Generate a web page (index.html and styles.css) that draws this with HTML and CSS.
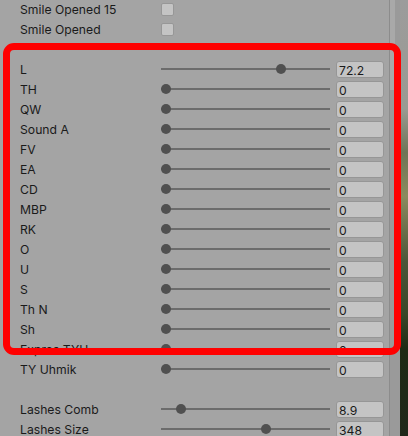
FILE: index.html
```html
<!DOCTYPE html>
<html>
<head>
<meta charset="utf-8">
<link rel="stylesheet" href="styles.css">
</head>
<body>
<div class="window">
  <div class="inspector">
    <div class="row"><span class="label">Smile Opened 15</span><span class="check"></span></div>
    <div class="row"><span class="label">Smile Opened</span><span class="check"></span></div>
    <div class="row"></div>
    <div class="row"><span class="label">L</span><div class="slider" style="--v:0.722"></div><span class="field">72.2</span></div>
    <div class="row"><span class="label">TH</span><div class="slider" style="--v:0"></div><span class="field">0</span></div>
    <div class="row"><span class="label">QW</span><div class="slider" style="--v:0"></div><span class="field">0</span></div>
    <div class="row"><span class="label">Sound A</span><div class="slider" style="--v:0"></div><span class="field">0</span></div>
    <div class="row"><span class="label">FV</span><div class="slider" style="--v:0"></div><span class="field">0</span></div>
    <div class="row"><span class="label">EA</span><div class="slider" style="--v:0"></div><span class="field">0</span></div>
    <div class="row"><span class="label">CD</span><div class="slider" style="--v:0"></div><span class="field">0</span></div>
    <div class="row"><span class="label">MBP</span><div class="slider" style="--v:0"></div><span class="field">0</span></div>
    <div class="row"><span class="label">RK</span><div class="slider" style="--v:0"></div><span class="field">0</span></div>
    <div class="row"><span class="label">O</span><div class="slider" style="--v:0"></div><span class="field">0</span></div>
    <div class="row"><span class="label">U</span><div class="slider" style="--v:0"></div><span class="field">0</span></div>
    <div class="row"><span class="label">S</span><div class="slider" style="--v:0"></div><span class="field">0</span></div>
    <div class="row"><span class="label">Th N</span><div class="slider" style="--v:0"></div><span class="field">0</span></div>
    <div class="row"><span class="label">Sh</span><div class="slider" style="--v:0"></div><span class="field">0</span></div>
    <div class="row"><span class="label">Expres TYH</span><div class="slider" style="--v:0"></div><span class="field">0</span></div>
    <div class="row"><span class="label">TY Uhmik</span><div class="slider" style="--v:0"></div><span class="field">0</span></div>
    <div class="row"></div>
    <div class="row"><span class="label">Lashes Comb</span><div class="slider" style="--v:0.094"></div><span class="field">8.9</span></div>
    <div class="row"><span class="label">Lashes Size</span><div class="slider" style="--v:0.626"></div><span class="field">348</span></div>
  </div>
  <div class="scrollbar"><div class="thumb"></div></div>
  <div class="scene"></div>
  <div class="highlight"></div>
</div>
</body>
</html>
```
FILE: styles.css
```css
html, body {
  margin: 0;
  padding: 0;
  background: #a4a4a4;
}
.window {
  position: relative;
  display: flex;
  width: 408px;
  height: 436px;
  overflow: hidden;
  font-family: Inter, "Noto Sans", sans-serif;
  font-size: 12.2px;
  color: #1a1a1a;
}
.inspector {
  flex: 0 0 389px;
  display: flex;
  flex-direction: column;
  gap: 2px;
  background: #a4a4a4;
}
.row {
  height: 18px;
  flex: 0 0 18px;
  display: flex;
  align-items: flex-start;
  padding-left: 20px;
}
.label {
  flex: 0 0 141px;
  padding-top: 1px;
  line-height: 18px;
  white-space: nowrap;
  overflow: hidden;
}
.check {
  margin-top: 3px;
  width: 11px;
  height: 11px;
  border: 1px solid #979797;
  border-radius: 2px;
  background: #c4c4c4;
}
.slider {
  position: relative;
  flex: 0 0 169px;
  height: 18px;
}
.slider::before {
  content: "";
  position: absolute;
  left: 0;
  right: 0;
  top: 8px;
  height: 2px;
  background: #6c6c6c;
}
.slider::after {
  content: "";
  position: absolute;
  top: 4px;
  left: calc(var(--v) * (100% - 10px));
  width: 10px;
  height: 10px;
  border-radius: 50%;
  background: #505050;
}
.field {
  margin-left: 6px;
  margin-top: 1px;
  box-sizing: border-box;
  width: 48px;
  height: 17px;
  border: 1px solid #969696;
  border-radius: 3px;
  background: #c4c4c4;
  padding-left: 2px;
  padding-top: 1px;
  line-height: 15px;
}
.scrollbar {
  flex: 0 0 10px;
  border-left: 1px solid #8c8c8c;
  background: #9a9a9a;
  position: relative;
}
.thumb {
  width: 5px;
  height: 90px;
  background: #a9a9a9;
}
.scene {
  flex: 1 1 auto;
  background: linear-gradient(to bottom, #9c9c9c 0, #9a9a92 25%, #6f7456 35%, #8c8a5e 45%, #4d5538 60%, #3a4628 72%, #1e2a14 80%, #20281a 100%);
}
.highlight {
  position: absolute;
  left: 3px;
  top: 43px;
  width: 398px;
  height: 312px;
  box-sizing: border-box;
  border: 7px solid #ff0000;
  border-radius: 11px;
  pointer-events: none;
}
```
